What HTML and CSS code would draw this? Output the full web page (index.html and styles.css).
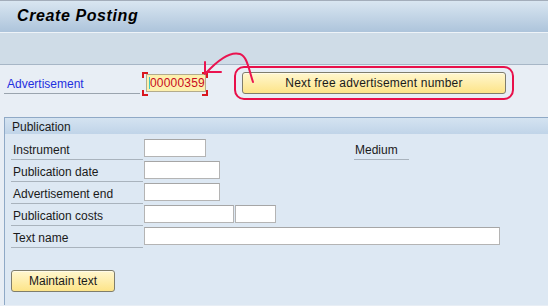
FILE: index.html
```html
<!DOCTYPE html>
<html>
<head>
    <title>Create Posting</title>
    <link rel="stylesheet" href="styles.css">
</head>
<body>
    <div class="titlebar">
        <h1>Create Posting</h1>
    </div>
    <div class="toolbar"></div>

    <div class="main">
        <div class="adv-row">
            <label class="adv-label">Advertisement</label>
            <div class="adv-field"><span class="caret"></span>00000359</div>
            <div class="mark-box">
                <button type="button" class="btn btn-wide">Next free advertisement number</button>
            </div>
        </div>

        <div class="group">
            <div class="group-head">Publication</div>
            <div class="group-body">
                <div class="row">
                    <span class="lbl">Instrument</span>
                    <span class="inp w-instrument"></span>
                    <span class="lbl lbl-medium">Medium</span>
                </div>
                <div class="row">
                    <span class="lbl">Publication date</span>
                    <span class="inp w-date"></span>
                </div>
                <div class="row">
                    <span class="lbl">Advertisement end</span>
                    <span class="inp w-date"></span>
                </div>
                <div class="row">
                    <span class="lbl">Publication costs</span>
                    <span class="inp w-cost"></span>
                    <span class="inp w-curr"></span>
                </div>
                <div class="row">
                    <span class="lbl">Text name</span>
                    <span class="inp w-text"></span>
                </div>

                <button type="button" class="btn btn-small">Maintain text</button>
            </div>
        </div>
    </div>

    <!-- red hand-drawn annotation -->
    <svg class="annot" width="548" height="306" viewBox="0 0 548 306">
        <g fill="none" stroke="#d9161e" stroke-width="2">
            <path d="M143,78 V73 H148"/>
            <path d="M202,73 H207 V78"/>
            <path d="M143,90 V95 H148"/>
            <path d="M202,95 H207 V90"/>
        </g>
        <g fill="none" stroke="#ea1450" stroke-width="2" stroke-linecap="round">
            <path d="M253,82 C249,70 247,56 240,54 C230,51 218,60 206,73"/>
            <path d="M205,62 V74 M206,72 H221"/>
        </g>
    </svg>
</body>
</html>
```

FILE: styles.css
```css
body {
    margin: 0;
    width: 548px;
    height: 306px;
    overflow: hidden;
    position: relative;
    font-family: "Liberation Sans", Arial, sans-serif;
    font-size: 12px;
    color: #1a1a1a;
    background-color: #e8eef5;
}

.titlebar {
    height: 31px;
    border-top: 1px solid #a3adba;
    background: linear-gradient(#d9e6f1, #adc4db);
}

.titlebar h1 {
    margin: 0;
    padding-left: 17px;
    line-height: 30px;
    font-size: 16px;
    font-style: italic;
    font-weight: bold;
    letter-spacing: 0.6px;
    color: #000;
}

.toolbar {
    height: 31px;
    border-top: 1px solid #eef3f8;
    border-bottom: 1px solid #a7b6c6;
    background-color: #cfdce7;
}

.main {
    display: flex;
    flex-direction: column;
    height: 240px;
}

.adv-row {
    display: flex;
    align-items: center;
    margin-top: 1px;
}

.adv-label {
    box-sizing: border-box;
    width: 136px;
    height: 22px;
    margin-left: 4px;
    padding: 4px 0 0 3px;
    line-height: 17px;
    border-bottom: 1px solid #9aa4ae;
    color: #1f2fe0;
}

.adv-field {
    display: flex;
    align-items: center;
    box-sizing: border-box;
    width: 60px;
    height: 18px;
    margin-left: 6px;
    padding-left: 2px;
    border: 1px solid #b3ab8c;
    background-color: #fdf0ad;
    color: #c80a1e;
    letter-spacing: 0.2px;
}

.caret {
    width: 1px;
    height: 12px;
    border-left: 1px solid #3cc8c8;
    background-color: #102a70;
}

.mark-box {
    margin-left: 28px;
    padding: 4px 6px;
    border: 2px solid #e8104a;
    border-radius: 10px;
}

.btn {
    display: block;
    box-sizing: border-box;
    height: 22px;
    padding: 0;
    border: 1px solid #7f7d6c;
    border-radius: 3px;
    background: linear-gradient(#fff7cf, #fde488);
    box-shadow: inset 0 1px 0 #fffbe8;
    font-family: "Liberation Sans", Arial, sans-serif;
    font-size: 12px;
    color: #1a1a1a;
}

.btn-wide {
    width: 264px;
    letter-spacing: 0.2px;
}

.btn-small {
    width: 104px;
    margin: 22px 0 0 6px;
}

.group {
    flex: 1;
    margin: 17px -10px 0 4px;
    border-top: 1px solid #8fa9c6;
    border-left: 1px solid #8fa9c6;
    background-color: #dde8f3;
    display: flex;
    flex-direction: column;
}

.group-head {
    box-sizing: border-box;
    height: 16px;
    padding: 2px 0 0 7px;
    line-height: 14px;
    background: linear-gradient(#d4e3f1, #c0d4e8);
}

.group-body {
    padding-top: 4px;
}

.row {
    display: flex;
    height: 22px;
}

.lbl {
    box-sizing: border-box;
    width: 132px;
    height: 22px;
    margin-left: 6px;
    padding: 3px 0 0 2px;
    line-height: 18px;
    border-bottom: 1px solid #a9b3bd;
}

.lbl-medium {
    width: 55px;
    margin-left: 148px;
    padding-left: 1px;
}

.inp {
    box-sizing: border-box;
    height: 18px;
    margin: 1px 0 0 1px;
    border: 1px solid #b4b4b4;
    border-top-color: #a6a6a6;
    background-color: #fff;
}

.w-instrument { width: 62px; }
.w-date { width: 76px; }
.w-cost { width: 90px; }
.w-curr { width: 41px; }
.w-text { width: 356px; }

.annot {
    position: absolute;
    top: 0;
    left: 0;
    pointer-events: none;
}
```
